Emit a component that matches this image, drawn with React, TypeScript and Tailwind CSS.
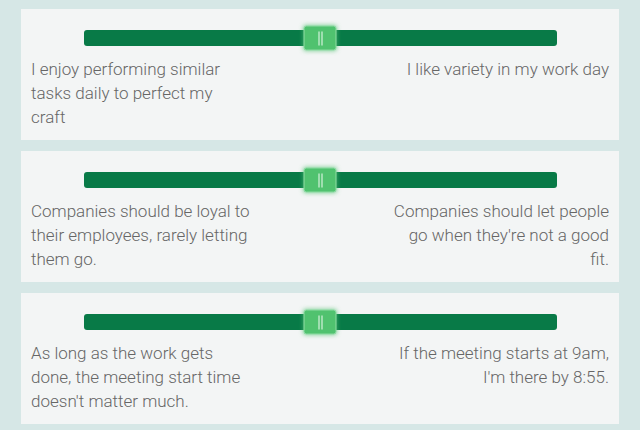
const rows = [
  {
    left: 'I enjoy performing similar tasks daily to perfect my craft',
    right: 'I like variety in my work day',
    leftWidth: 'w-[212px]',
  },
  {
    left: 'Companies should be loyal to their employees, rarely letting them go.',
    right: "Companies should let people go when they're not a good fit.",
    leftWidth: 'w-[226px]',
  },
  {
    left: 'As long as the work gets done, the meeting start time doesn\'t matter much.',
    right: "If the meeting starts at 9am, I'm there by 8:55.",
    leftWidth: 'w-[226px]',
  },
];

function Slider() {
  return (
    <div className="relative mx-auto h-4 w-[473px] rounded-[3px] bg-[#087a47]">
      {/* Thumb */}
      <div className="absolute left-1/2 top-1/2 flex h-[25px] w-[33px] -translate-x-1/2 -translate-y-1/2 items-center justify-center gap-[2px] rounded-[3px] border border-[#8fdca5] bg-[#50c26f] shadow-[0_0_4px_rgba(80,194,111,0.7)]">
        <span className="h-[14px] w-px bg-white/90" />
        <span className="h-[14px] w-px bg-white/90" />
      </div>
    </div>
  );
}

export default function App() {
  return (
    <div
      className="flex h-[430px] w-[640px] flex-col gap-[11px] bg-[#d6e7e6] px-[21px] pt-[9px]"
      style={{ fontFamily: 'Roboto, "Liberation Sans", sans-serif' }}
    >
      {rows.map((row, i) => (
        <div key={i} className="h-[131px] bg-[#f3f5f5] px-[10px] pt-[21px]">
          <Slider />
          <div className="mt-[11px] flex justify-between text-[17px] font-light leading-[24px] text-[#666]">
            <p className={row.leftWidth}>{row.left}</p>
            <p className="w-[219px] text-right">{row.right}</p>
          </div>
        </div>
      ))}
    </div>
  );
}
